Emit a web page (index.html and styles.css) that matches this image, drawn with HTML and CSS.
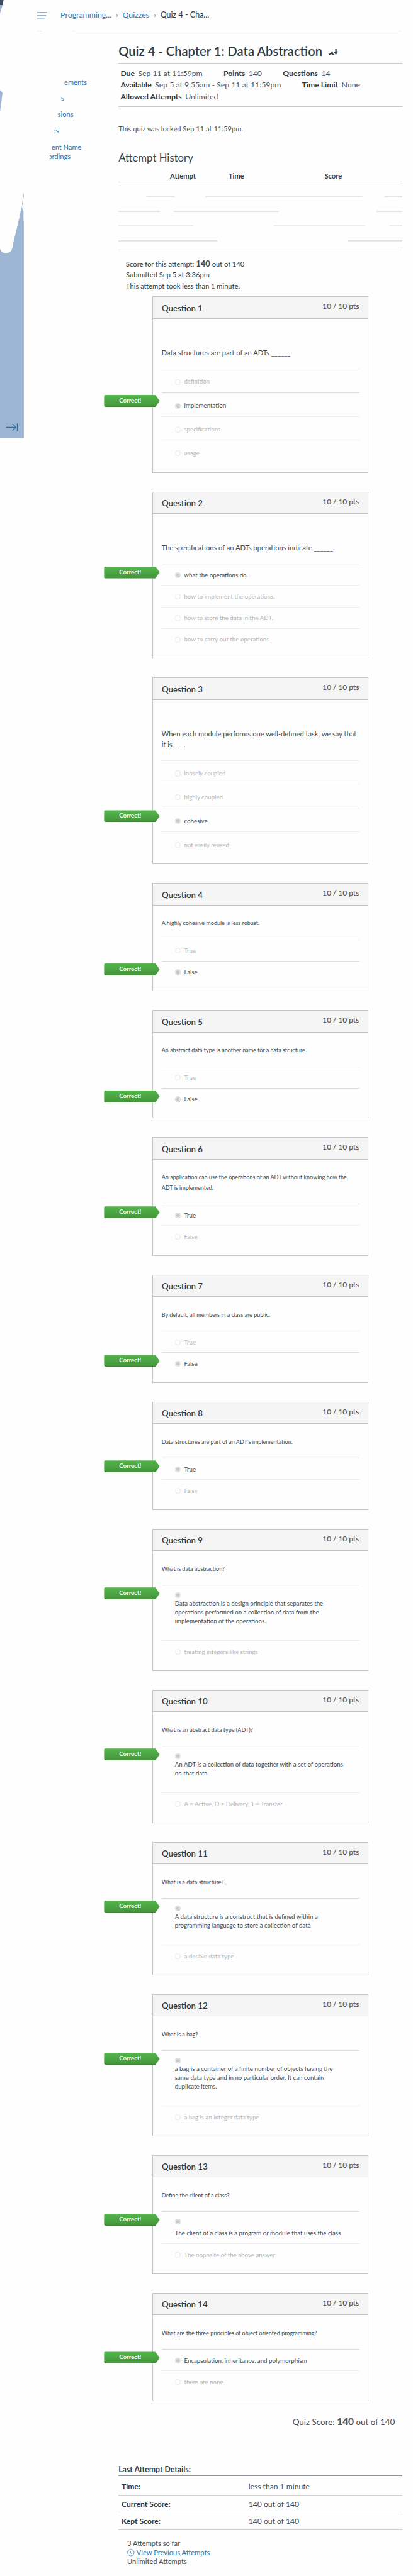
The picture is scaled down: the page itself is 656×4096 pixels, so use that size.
FILE: index.html
```
<!DOCTYPE html>
<html lang="en">
<head>
<meta charset="utf-8">
<title>Quiz 4 - Chapter 1: Data Abstraction</title>
<link rel="stylesheet" href="styles.css">
</head>
<body>
<div class="page">
  <svg class="rail" viewBox="0 0 48 877" aria-hidden="true">
    <path fill="#3c4c5b" d="M0 0H7L5 10H0Z"/>
    <path fill="#9cb6d4" d="M0 10H5L0 27ZM0 180L5 186L0 224ZM47.5 386L45 401L43.7 413L45 410L47.5 393ZM43.5 413L45 419L47 422V440L47.7 445V877H0V498Q3 507 12 507Q22 506 25 496L26.500 486L36 448Z"/>
    <path fill="none" stroke="#2273a8" stroke-width="1.500" d="M12 855.500H32M25 849L32 855.500L25 862M34.500 847.500V863.500"/>
  </svg>

  <header class="topbar">
    <svg class="menu" viewBox="0 0 21 16" aria-hidden="true"><path stroke="#7295bf" stroke-width="1.500" d="M1 1.200H21M1 7.500H19M1 13.900H17"/></svg>
    <nav class="crumbs"><a>Programming...</a><i>›</i><a>Quizzes</a><i>›</i><span>Quiz 4 - Cha...</span></nav>
    <div class="topline"><span></span><span></span></div>
  </header>

  <nav class="side">
    <a class="s1">ements</a>
    <a class="s2">s</a>
    <a class="s3">sions</a>
    <a class="s4 cut">es</a>
    <a class="s5">ent Name</a>
    <a class="s6 cut">ordings</a>
  </nav>

  <main class="main">
    <h1>Quiz 4 - Chapter 1: Data Abstraction
      <svg class="grade" viewBox="0 0 20 14" aria-hidden="true"><path fill="#2d3b45" fill-rule="evenodd" d="M0 12.500L8.500 3.500L12 12.500H9.400L8.600 10.300H5.200L3.200 12.500ZM6.400 8.800H8.200L7.700 6.700ZM14.500 0H17.300V5H20L15.700 11.500L11.500 5.500H14.500Z"/></svg>
    </h1>
    <section class="meta">
      <div><p><b>Due</b> Sep 11 at 11:59pm</p><p><b>Points</b> 140</p><p><b>Questions</b> 14</p></div>
      <div><p><b>Available</b> Sep 5 at 9:55am - Sep 11 at 11:59pm</p><p><b>Time Limit</b> None</p></div>
      <div><p><b>Allowed Attempts</b> Unlimited</p></div>
    </section>
    <p class="locked">This quiz was locked Sep 11 at 11:59pm.</p>
    <h2>Attempt History</h2>
    <div class="history-head"><span>Attempt</span><span>Time</span><span>Score</span></div>
    <svg class="history-lines" viewBox="0 0 568 136" aria-hidden="true"><path stroke="#c7cdd1" stroke-width="1.200" d="M56 29H113M174 29H488M532 29H568M0 58H84M111 58H321M517 58H568M0 87H150M311 87H493M542 87H568M0 117H198M458 117H568M0 135.300H568"/></svg>
    <section class="summary">
      <p>Score for this attempt: <b>140</b> out of 140</p>
      <p>Submitted Sep 5 at 3:36pm</p>
      <p>This attempt took less than 1 minute.</p>
    </section>

    <section class="questions">
      <article class="q large tall">
        <header><h3>Question 1</h3><span>10 / 10 pts</span></header>
        <p class="text">Data structures are part of an ADTs ______.</p>
        <div class="opt"><i></i>definition</div>
        <div class="opt ok"><em>Correct!</em><i></i>implementation</div>
        <div class="opt"><i></i>specifications</div>
        <div class="opt"><i></i>usage</div>
      </article>
      <article class="q large">
        <header><h3>Question 2</h3><span>10 / 10 pts</span></header>
        <p class="text">The specifications of an ADTs operations indicate ______.</p>
        <div class="opt ok"><em>Correct!</em><i></i>what the operations do.</div>
        <div class="opt"><i></i>how to implement the operations.</div>
        <div class="opt"><i></i>how to store the data in the ADT.</div>
        <div class="opt"><i></i>how to carry out the operations.</div>
      </article>
      <article class="q large tall">
        <header><h3>Question 3</h3><span>10 / 10 pts</span></header>
        <p class="text">When each module performs one well-defined task, we say that<br>it is ___.</p>
        <div class="opt"><i></i>loosely coupled</div>
        <div class="opt"><i></i>highly coupled</div>
        <div class="opt ok"><em>Correct!</em><i></i>cohesive</div>
        <div class="opt"><i></i>not easily reused</div>
      </article>
      <article class="q">
        <header><h3>Question 4</h3><span>10 / 10 pts</span></header>
        <p class="text">A highly cohesive module is less robust.</p>
        <div class="opt"><i></i>True</div>
        <div class="opt ok"><em>Correct!</em><i></i>False</div>
      </article>
      <article class="q">
        <header><h3>Question 5</h3><span>10 / 10 pts</span></header>
        <p class="text">An abstract data type is another name for a data structure.</p>
        <div class="opt"><i></i>True</div>
        <div class="opt ok"><em>Correct!</em><i></i>False</div>
      </article>
      <article class="q">
        <header><h3>Question 6</h3><span>10 / 10 pts</span></header>
        <p class="text">An application can use the operations of an ADT without knowing how the<br>ADT is implemented.</p>
        <div class="opt ok"><em>Correct!</em><i></i>True</div>
        <div class="opt"><i></i>False</div>
      </article>
      <article class="q">
        <header><h3>Question 7</h3><span>10 / 10 pts</span></header>
        <p class="text">By default, all members in a class are public.</p>
        <div class="opt"><i></i>True</div>
        <div class="opt ok"><em>Correct!</em><i></i>False</div>
      </article>
      <article class="q">
        <header><h3>Question 8</h3><span>10 / 10 pts</span></header>
        <p class="text">Data structures are part of an ADT's implementation.</p>
        <div class="opt ok"><em>Correct!</em><i></i>True</div>
        <div class="opt"><i></i>False</div>
      </article>
      <article class="q">
        <header><h3>Question 9</h3><span>10 / 10 pts</span></header>
        <p class="text">What is data abstraction?</p>
        <div class="opt ok multi"><em>Correct!</em><i></i><p>Data abstraction is a design principle that separates the<br>operations performed on a collection of data from the<br>implementation of the operations.</p></div>
        <div class="opt"><i></i>treating integers like strings</div>
      </article>
      <article class="q">
        <header><h3>Question 10</h3><span>10 / 10 pts</span></header>
        <p class="text">What is an abstract data type (ADT)?</p>
        <div class="opt ok multi"><em>Correct!</em><i></i><p>An ADT is a collection of data together with a set of operations<br>on that data</p></div>
        <div class="opt"><i></i>A = Active, D = Delivery, T = Transfer</div>
      </article>
      <article class="q">
        <header><h3>Question 11</h3><span>10 / 10 pts</span></header>
        <p class="text">What is a data structure?</p>
        <div class="opt ok multi"><em>Correct!</em><i></i><p>A data structure is a construct that is defined within a<br>programming language to store a collection of data</p></div>
        <div class="opt"><i></i>a double data type</div>
      </article>
      <article class="q">
        <header><h3>Question 12</h3><span>10 / 10 pts</span></header>
        <p class="text">What is a bag?</p>
        <div class="opt ok multi"><em>Correct!</em><i></i><p>a bag is a container of a finite number of objects having the<br>same data type and in no particular order. It can contain<br>duplicate items.</p></div>
        <div class="opt"><i></i>a bag is an integer data type</div>
      </article>
      <article class="q">
        <header><h3>Question 13</h3><span>10 / 10 pts</span></header>
        <p class="text">Define the client of a class?</p>
        <div class="opt ok multi short"><em>Correct!</em><i></i><p>The client of a class is a program or module that uses the class</p></div>
        <div class="opt"><i></i>The opposite of the above answer</div>
      </article>
      <article class="q">
        <header><h3>Question 14</h3><span>10 / 10 pts</span></header>
        <p class="text">What are the three principles of object oriented programming?</p>
        <div class="opt ok"><em>Correct!</em><i></i>Encapsulation, inheritance, and polymorphism</div>
        <div class="opt"><i></i>there are none.</div>
      </article>
    </section>

    <p class="quiz-score">Quiz Score: <b>140</b> out of 140</p>
    <h4>Last Attempt Details:</h4>
    <dl class="details">
      <div><dt>Time:</dt><dd>less than 1 minute</dd></div>
      <div><dt>Current Score:</dt><dd>140 out of 140</dd></div>
      <div><dt>Kept Score:</dt><dd>140 out of 140</dd></div>
    </dl>
    <section class="attempts">
      <p>3 Attempts so far</p>
      <a><svg class="clock" viewBox="0 0 15 15" aria-hidden="true"><path fill="none" stroke="#2b73b0" d="M7.500 .8A6.700 6.700 0 1 1 7.490 .8ZM7 3.800V8L10 10.500"/></svg>View Previous Attempts</a>
      <p>Unlimited Attempts</p>
    </section>
  </main>
</div>
</body>
</html>
```
FILE: styles.css
```
/* 1rem equals ten design pixels of the 826px wide layout */
html { font-size: 7.942px; }
* { box-sizing: border-box; margin: 0; padding: 0; }
body { background: #fefefe; color: #2d3b45; font: 1.403rem/2rem Lato, sans-serif; }
i, em { font-style: normal; }
a { color: #2b73b0; }

.page {
  display: grid;
  grid-template-columns: 7.2rem 16.5rem 56.8rem;
  grid-template-rows: 6.3rem auto;
  height: 515.7rem;
}
.rail { grid-column: 1; grid-row: 1 / 3; width: 4.8rem; height: 87.7rem; display: block; }

/* breadcrumb bar */
.topbar { grid-column: 2 / 4; grid-row: 1; display: grid; grid-template-columns: 4.9rem 1fr; grid-template-rows: 6.15rem 1px; }
.menu { width: 2.1rem; height: 1.6rem; margin: 2.45rem 0 0 .1rem; }
.crumbs { display: flex; padding-top: 2rem; font-size: 1.56rem; white-space: nowrap; }
.crumbs i { width: 2.2rem; text-align: center; color: #7d868c; }
.crumbs span { font-size: 1.58rem; }
.topline { grid-column: 1 / 3; display: flex; justify-content: space-between; }
.topline span { height: 1px; background: #d3dad9; width: 66.3rem; }
.topline span:first-child { width: 1.1rem; }

/* course navigation */
.side { grid-column: 2; grid-row: 2; padding-top: 9.15rem; font-size: 1.4rem; }
.side a { display: block; height: 3.25rem; line-height: 2rem; white-space: nowrap; position: relative; }
.side .s1 { margin-left: 5.65rem; }
.side .s2 { margin-left: 5rem; }
.side .s3 { margin-left: 4.35rem; }
.side .s4 { margin-left: 3.2rem; }
.side .s5 { margin-left: 3.1rem; height: 1.85rem; }
.side .s6 { margin-left: 2.4rem; }
.cut::before { content: ""; position: absolute; left: 0; top: 0; width: .4rem; height: 2rem; background: #fefefe; }

.main { grid-column: 3; grid-row: 2; }
h1 { height: 6.45rem; padding-top: 2.5rem; border-bottom: 1px solid #c7cdd1; font-size: 2.534rem; line-height: 3rem; font-weight: 600; white-space: nowrap; }
.grade { width: 2rem; height: 1.4rem; margin-left: .5rem; vertical-align: -.05rem; }
.meta { height: 8.6rem; padding: .83rem .4rem 0; border-bottom: 1px solid #c7cdd1; font-size: 1.54rem; line-height: 2.33rem; color: #4a555d; }
.meta div { display: flex; gap: 4.2rem; white-space: nowrap; }
.meta b { color: #2d3b45; margin-right: .3rem; }
.locked { margin-top: 3.5rem; color: #4a555d; }
h2 { margin-top: 3.2rem; font-size: 2.113rem; line-height: 3rem; font-weight: 400; color: #38454e; }
.history-head { display: grid; grid-template-columns: 10.3rem 11.7rem 19.2rem 1fr; height: 3.45rem; padding-top: 1.15rem; border-bottom: 1px solid #b9c0c5; font-size: 1.406rem; font-weight: 700; }
.history-head span:first-child { grid-column: 2; }
.history-lines { display: block; width: 56.8rem; height: 13.6rem; }
.summary { padding: 1.65rem 0 0 1.5rem; height: 9.25rem; line-height: 2.2rem; }
.summary b { font-size: 1.638rem; color: #444; }

/* question cards */
.questions { display: grid; gap: 3.764rem; padding-left: 6.8rem; }
.q { width: 43.2rem; padding-bottom: 1.7rem; border: 1px solid #c3c5c7; }
.q header { display: flex; justify-content: space-between; height: 4.35rem; padding: 0 1.75rem; background: #f5f5f5; border-bottom: 1px solid #bfc1c3; }
.q h3 { padding-top: 1.3rem; font-size: 1.663rem; font-weight: 600; }
.q header span { padding-top: .9rem; font-size: 1.499rem; font-weight: 600; color: #595959; }
.q .text { margin: 0 1.7rem; padding: 2.6rem 0 2.07rem; font-size: 1.138rem; line-height: 2.1rem; color: #3c4850; white-space: nowrap; }
.q.large .text { padding-top: 5.8rem; font-size: 1.4rem; }
.opt { position: relative; display: flex; align-items: center; height: 4.3rem; margin: 0 1.7rem; padding: .2rem 0 0 2.65rem; border-top: 1px solid #ededed; font-size: 1.225rem; color: #b3b7ba; white-space: nowrap; }
.tall .opt { height: 4.76rem; padding-top: .5rem; }
.opt i { width: 1.15rem; height: 1.15rem; margin-right: .7rem; border: 1px solid #e6e6e6; border-radius: 50%; }
.opt.ok { border-top-color: #dcdcdc; color: #3c4850; }
.ok i { border-color: #d0d0d0; background: radial-gradient(circle, #cacaca 52%, #efefef 58%); }
.opt.multi { display: block; height: auto; padding: 1.4rem 0 2.97rem 2.65rem; }
.multi i { display: block; }
.multi p { margin-top: .2rem; line-height: 1.75rem; }
.opt.short { padding-bottom: 1.15rem; }
.short p { margin-top: .9rem; }
.opt em {
  position: absolute; top: .4rem; left: -11.5rem; width: 11.1rem; height: 2.4rem; padding-left: 3rem;
  background: linear-gradient(#52b64b, #46963c 92%, #3a7c31); color: #fff; font-size: 1.22rem; line-height: 2.2rem; font-weight: 700;
  border-radius: .3rem 0 0 .3rem; clip-path: polygon(0 0, 92.500% 0, 100% 50%, 92.500% 100%, 0 100%);
}

/* results */
.quiz-score { margin: 3.2rem 1.5rem 0 0; text-align: right; font-size: 1.69rem; color: #4a4f53; }
.quiz-score b { font-size: 1.943rem; }
h4 { margin-top: 7.45rem; height: 2.2rem; border-bottom: 1px solid #8f979c; font-size: 1.55rem; }
.details { font-size: 1.53rem; }
.details div { display: grid; grid-template-columns: 25.4rem 1fr; height: 3.45rem; padding: .75rem 0 0 .6rem; border-bottom: 1px solid #cfd4d7; }
.details div:first-child { height: 3.9rem; padding-top: 1.1rem; }
.details dt { font-weight: 700; }
.details dd { color: #3f4a52; }
.attempts { padding: 1.85rem 0 0 1.75rem; line-height: 1.82rem; color: #444f57; }
.attempts a { display: flex; align-items: center; gap: .4rem; }
.clock { width: 1.45rem; height: 1.45rem; }
```
